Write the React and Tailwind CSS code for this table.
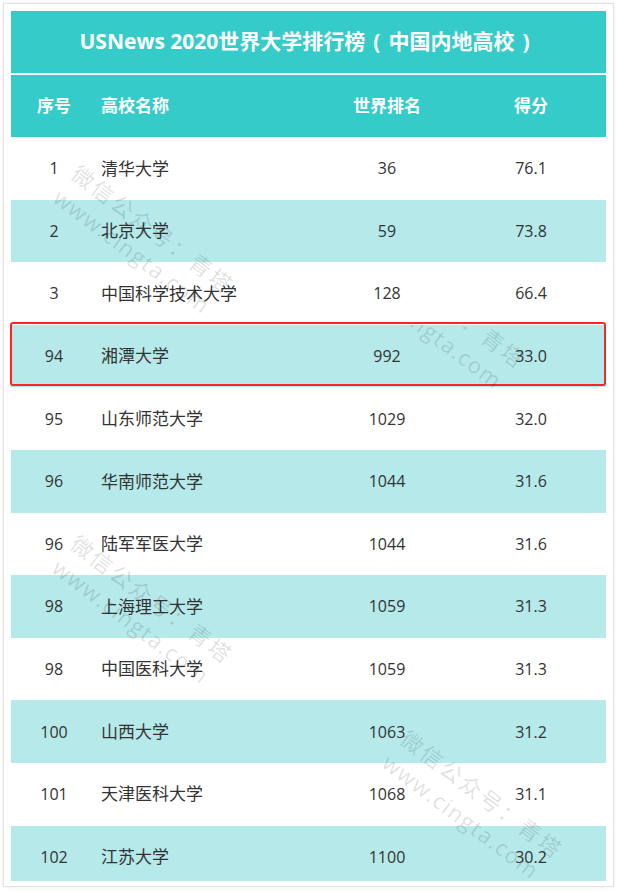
import React from 'react';

const rows = [
  ['1', '清华大学', '36', '76.1'],
  ['2', '北京大学', '59', '73.8'],
  ['3', '中国科学技术大学', '128', '66.4'],
  ['94', '湘潭大学', '992', '33.0'],
  ['95', '山东师范大学', '1029', '32.0'],
  ['96', '华南师范大学', '1044', '31.6'],
  ['96', '陆军军医大学', '1044', '31.6'],
  ['98', '上海理工大学', '1059', '31.3'],
  ['98', '中国医科大学', '1059', '31.3'],
  ['100', '山西大学', '1063', '31.2'],
  ['101', '天津医科大学', '1068', '31.1'],
  ['102', '江苏大学', '1100', '30.2'],
];

const cols = 'grid grid-cols-[86px_203px_174px_114px_1fr] items-center';

// diagonal watermark, placed over the table
const Watermark = ({ className }) => (
  <div
    className={`pointer-events-none absolute origin-top-left rotate-[37deg] whitespace-nowrap text-[22px] leading-[30px] text-black/[0.13] ${className}`}
  >
    <div className="tracking-[2.5px]">微信公众号：青塔</div>
    <div className="tracking-[1.5px]">www.cingta.com</div>
  </div>
);

const Row = ({ r, shaded }) => (
  <div className={`${cols} h-[62.6px] text-[#333] ${shaded ? 'bg-[#b5e9ea]' : 'bg-white'}`}>
    <div className="text-center text-[16px]">{r[0]}</div>
    <div className="pl-[4px] text-[17px]">{r[1]}</div>
    <div className="text-center text-[16px]">{r[2]}</div>
    <div className="text-center text-[16px]">{r[3]}</div>
  </div>
);

export default function App() {
  return (
    <div className="min-h-screen bg-white p-[3px] font-['Open_Sans','Noto_Sans_CJK_SC',sans-serif]">
      <div className="h-[884px] w-[611px] border border-[#e2e2e2] px-[7px] pt-[7px] shadow-[0_0_3px_rgba(0,0,0,0.08)]">
        <div className="relative">
          {/* title */}
          <div className="flex h-[62px] items-center justify-center bg-[#35cbc9] text-[21px] font-bold text-white">
            USNews 2020世界大学排行榜
            <span className="inline-block w-[1.1em] text-center">(</span>
            中国内地高校
            <span className="inline-block w-[1.1em] text-center">)</span>
          </div>
          {/* header */}
          <div className={`${cols} mt-[2px] h-[62px] bg-[#35cbc9] text-[17px] font-bold text-white`}>
            <div className="text-center">序号</div>
            <div className="pl-[4px]">高校名称</div>
            <div className="text-center">世界排名</div>
            <div className="text-center">得分</div>
          </div>

          {rows.map((r, i) => {
            const shaded = i % 2 === 1;
            if (i === 3) {
              return (
                <div key={i} className="relative">
                  <Row r={r} shaded={shaded} />
                  <div className="pointer-events-none absolute -left-[1px] right-0 -top-[3px] bottom-[1px] rounded-[3px] border-2 border-[#ff2424]" />
                </div>
              );
            }
            if (i === rows.length - 1) {
              return (
                <div key={i} className="h-[55px] overflow-hidden">
                  <Row r={r} shaded={shaded} />
                </div>
              );
            }
            return <Row key={i} r={r} shaded={shaded} />;
          })}

          <Watermark className="left-[73px] top-[147px]" />
          {/* this one only shows from the highlighted row down */}
          <div className="pointer-events-none absolute left-0 right-0 top-[314px] h-[100px] overflow-hidden">
            <Watermark className="left-[365px] top-[-92px]" />
          </div>
          <Watermark className="left-[72px] top-[517px]" />
          <Watermark className="left-[402px] top-[712px]" />
        </div>
      </div>
    </div>
  );
}
